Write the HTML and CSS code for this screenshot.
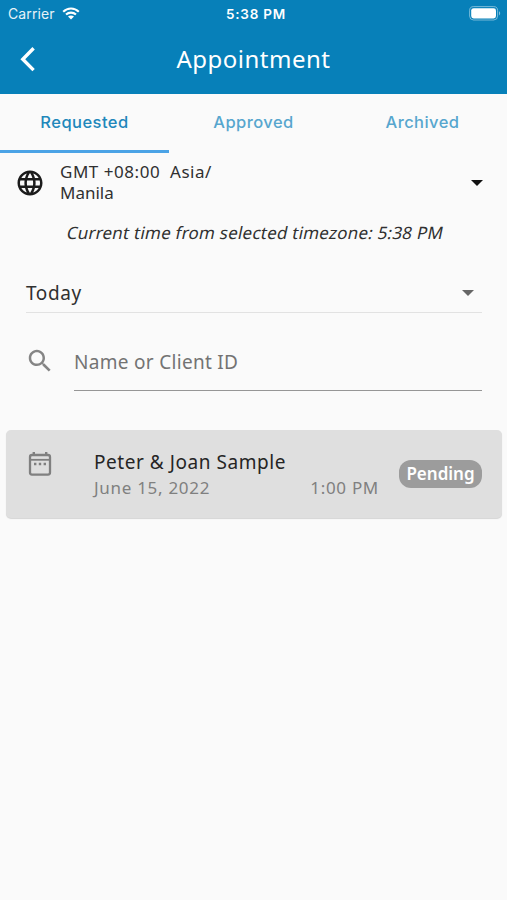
FILE: index.html
```html
<!DOCTYPE html>
<html lang="en">
<head>
  <meta charset="UTF-8">
  <meta name="viewport" content="width=device-width, initial-scale=1.0">
  <title>Appointment</title>
  <link rel="stylesheet" href="styles.css">
</head>
<body>
  <header>
    <div class="status-bar">
      <div class="carrier">
        <span class="carrier-name">Carrier</span>
        <svg class="wifi" width="18" height="13" viewBox="0 0 18 13">
          <path d="M1.2 4.7C5.6.4 12.4.4 16.8 4.7M4 7.6c2.9-2.7 7.1-2.7 10 0" fill="none" stroke="#fff" stroke-width="2.1"/>
          <path d="M9 12.5L6 9.6c1.7-1.5 4.3-1.5 6 0z" fill="#fff"/>
        </svg>
      </div>
      <span class="clock">5:38 PM</span>
      <svg class="battery" width="32" height="15" viewBox="0 0 32 15">
        <rect x="0.6" y="0.6" width="28" height="13.4" rx="4" fill="none" stroke="#fff" stroke-opacity="0.45"/>
        <rect x="2.2" y="2.2" width="24.8" height="10.2" rx="2.4" fill="#fff"/>
        <path d="M30 5.2c1.6.6 1.6 3.6 0 4.2z" fill="#fff" fill-opacity="0.5"/>
      </svg>
    </div>
    <div class="title-bar">
      <svg class="back" width="16" height="26" viewBox="0 0 16 26">
        <path d="M13.6 2.3L2.8 13.2l10.8 10.9" fill="none" stroke="#fff" stroke-width="3.4"/>
      </svg>
      <h1>Appointment</h1>
    </div>
  </header>

  <nav class="tabs">
    <a class="tab active">Requested</a>
    <a class="tab">Approved</a>
    <a class="tab">Archived</a>
  </nav>

  <main>
    <div class="timezone">
      <svg width="30" height="30" viewBox="0 0 24 24" fill="#1b1b1b">
        <path d="M11.99 2C6.47 2 2 6.48 2 12s4.47 10 9.99 10C17.52 22 22 17.52 22 12S17.52 2 11.99 2zm6.93 6h-2.95c-.32-1.25-.78-2.45-1.38-3.56 1.84.63 3.37 1.91 4.33 3.56zM12 4.04c.83 1.2 1.48 2.53 1.91 3.96h-3.82c.43-1.43 1.08-2.76 1.91-3.96zM4.26 14C4.1 13.36 4 12.69 4 12s.1-1.36.26-2h3.38c-.08.66-.14 1.32-.14 2s.06 1.34.14 2H4.26zm.82 2h2.95c.32 1.25.78 2.45 1.38 3.56-1.84-.63-3.37-1.9-4.33-3.56zm2.95-8H5.08c.96-1.66 2.49-2.93 4.33-3.56C8.81 5.55 8.35 6.75 8.03 8zM12 19.96c-.83-1.2-1.48-2.53-1.91-3.96h3.82c-.43 1.43-1.08 2.76-1.91 3.96zM14.34 14H9.66c-.09-.66-.16-1.32-.16-2s.07-1.35.16-2h4.68c.09.65.16 1.32.16 2s-.07 1.34-.16 2zm.25 5.56c.6-1.11 1.06-2.31 1.38-3.56h2.95c-.96 1.65-2.49 2.93-4.33 3.56zM16.36 14c.08-.66.14-1.32.14-2s-.06-1.34-.14-2h3.38c.16.64.26 1.31.26 2s-.1 1.36-.26 2h-3.38z"/>
      </svg>
      <div class="timezone-name"><span class="tz-offset">GMT +08:00&nbsp; Asia/</span><br>Manila</div>
      <svg width="12" height="6" viewBox="0 0 12 6"><path d="M0 0h12L6 6z" fill="#111"/></svg>
    </div>
    <p class="current-time">Current time from selected timezone: 5:38 PM</p>

    <div class="day-select">
      <span class="day">Today</span>
      <svg width="12" height="6" viewBox="0 0 12 6"><path d="M0 0h12L6 6z" fill="#666"/></svg>
    </div>

    <div class="search">
      <svg width="30" height="30" viewBox="0 0 24 24" fill="#858585">
        <path d="M15.5 14h-.79l-.28-.27C15.41 12.59 16 11.11 16 9.5 16 5.91 13.09 3 9.5 3S3 5.91 3 9.5 5.91 16 9.5 16c1.61 0 3.09-.59 4.23-1.57l.27.28v.79l5 4.99L20.49 19l-4.99-5zm-6 0C7.01 14 5 11.99 5 9.5S7.01 5 9.5 5 14 7.01 14 9.5 11.99 14 9.5 14z"/>
      </svg>
      <div class="search-field">Name or Client ID</div>
    </div>

    <div class="card">
      <svg class="calendar" width="24" height="26" viewBox="0 0 24 26">
        <rect x="2" y="4" width="20" height="19.6" rx="2" fill="none" stroke="#808080" stroke-width="2.3"/>
        <path d="M5.8 1v3M18.2 1v3" stroke="#808080" stroke-width="2.4"/>
        <path d="M2 8.8h20" stroke="#808080" stroke-width="1.8"/>
        <path d="M6 13h2.4M10.8 13h2.4M15.6 13H18" stroke="#808080" stroke-width="2.3"/>
      </svg>
      <div class="details">
        <div class="client">Peter &amp; Joan Sample</div>
        <div class="when"><span>June 15, 2022</span><span class="time">1:00 PM</span></div>
      </div>
      <div class="badge">Pending</div>
    </div>
  </main>
</body>
</html>
```
FILE: styles.css
```css
body {
  margin: 0;
  min-height: 900px;
  background-color: #fafafa;
  color: #303030;
  font-family: "Noto Sans", sans-serif;
}
svg {
  display: block;
  flex-shrink: 0;
}
span {
  white-space: nowrap;
}

/* Header */
header {
  height: 94px;
  background-color: #0780b9;
  color: #fff;
}
.status-bar {
  display: grid;
  grid-template-columns: 1fr auto 1fr;
  align-items: center;
  height: 27px;
  padding: 0 6px 0 8px;
  font-family: Inter, sans-serif;
  font-size: 14px;
}
.carrier {
  display: flex;
  align-items: center;
  gap: 7px;
}
.carrier-name {
  letter-spacing: 0.1px;
  opacity: 0.9;
}
.clock {
  margin-left: 3px;
  font-size: 13.5px;
  font-weight: 600;
  letter-spacing: 0.8px;
}
.battery {
  justify-self: end;
}
.title-bar {
  display: grid;
  grid-template-columns: 60px 1fr 60px;
  align-items: center;
  height: 64px;
}
.back {
  margin-left: 20px;
}
h1 {
  margin: 0;
  text-align: center;
  font-size: 24px;
  font-weight: 400;
  line-height: 32px;
  letter-spacing: 0.5px;
}

/* Tabs */
.tabs {
  display: grid;
  grid-template-columns: repeat(3, 1fr);
  height: 59px;
  font-family: Inter, sans-serif;
  font-size: 16.5px;
  font-weight: 500;
  letter-spacing: 0.45px;
  color: #57a6ce;
}
.tab {
  box-sizing: border-box;
  padding-top: 17px;
  line-height: 22px;
  text-align: center;
}
.tab.active {
  color: #2187bb;
  border-bottom: 3px solid #4ba3e6;
}

/* Timezone */
.timezone {
  display: flex;
  align-items: center;
  height: 60px;
  padding: 0 24px 0 15px;
}
.timezone-name {
  flex: 1;
  margin: -2px 0 0 15px;
  font-size: 17px;
  line-height: 21px;
}
.tz-offset {
  letter-spacing: 0.53px;
}
/* slanted upright letters, rounder than the real italic */
.current-time {
  margin: 9px 0 0 67px;
  font-size: 17px;
  line-height: 22px;
  letter-spacing: 0.22px;
  white-space: nowrap;
  transform: skewX(-12deg);
}

/* Day filter */
.day-select {
  display: flex;
  align-items: center;
  justify-content: space-between;
  height: 38px;
  margin: 30px 25px 0 26px;
  padding-right: 8px;
  border-bottom: 1px solid #e2e2e2;
  font-size: 19px;
}
.day {
  letter-spacing: 0.6px;
}

/* Search */
.search {
  display: flex;
  height: 58px;
  margin: 20px 25px 0 25px;
}
.search svg {
  margin-top: 13px;
}
.search-field {
  flex: 1;
  margin-left: 19px;
  border-bottom: 1px solid #969696;
  color: #737373;
  font-size: 19px;
  line-height: 58px;
  letter-spacing: 0.3px;
}

/* Appointment card */
.card {
  display: flex;
  box-sizing: border-box;
  height: 88px;
  margin: 39px 5px 0 6px;
  padding: 20px 20px 0 22px;
  border-radius: 5px;
  background-color: #dfdfdf;
  box-shadow: 0 1px 1px rgba(0, 0, 0, 0.15);
}
.calendar {
  margin-top: 1px;
}
.details {
  width: 285px;
  margin-left: 42px;
  font-size: 19px;
  line-height: 25px;
}
.client {
  color: #252525;
  letter-spacing: 0.55px;
}
.when {
  display: flex;
  justify-content: space-between;
  color: #808080;
  font-size: 17px;
  letter-spacing: 0.7px;
}
.badge {
  height: 28px;
  width: 83px;
  margin: 10px 0 0 auto;
  border-radius: 12px;
  background-color: #9c9c9c;
  color: #fff;
  font-size: 17px;
  font-weight: 600;
  line-height: 28px;
  text-align: center;
}
```
